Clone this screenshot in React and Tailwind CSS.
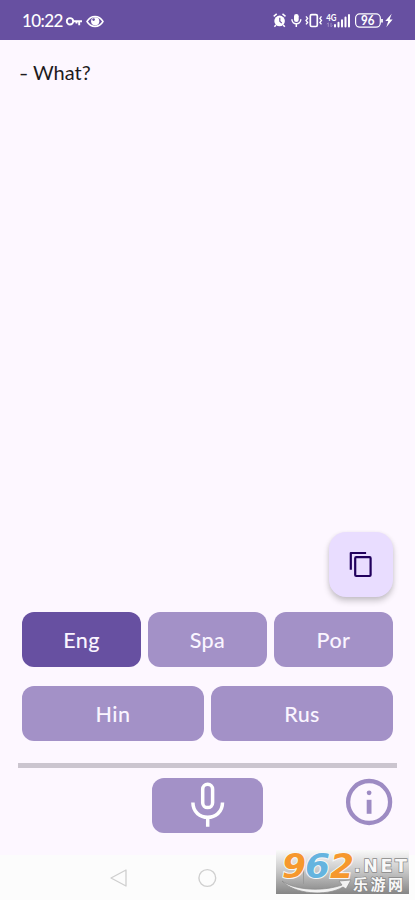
import React from 'react';

const LANGUAGE_ROWS = [
  ['Eng', 'Spa', 'Por'],
  ['Hin', 'Rus'],
];

/**
 * Android status bar
 */
const StatusBar = () => (
  <header className="flex h-10 shrink-0 items-center justify-between bg-[#6750a1] pl-[22px] pr-[21px] text-white">
    <div className="flex items-center pt-0.5">
      <span className="w-[43px] text-[17px] font-medium leading-5 tracking-[-0.6px]">10:22</span>
      <svg width="17" height="11" viewBox="0 0 17 11" fill="none" stroke="currentColor" strokeWidth="1.9">
        <circle cx="5" cy="5.3" r="3.2" />
        <path d="M8.2 5.2H17M14.2 5.2v4M11.5 5.2v2.3" />
      </svg>
      <svg className="ml-1" width="18" height="13" viewBox="0 0 18 13">
        <path d="M1 6.5C5-.3 13-.3 17 6.5 13 13.2 5 13.2 1 6.5Z" fill="none" stroke="currentColor" strokeWidth="1.5" />
        <circle cx="9.2" cy="6.3" r="4.1" fill="currentColor" />
        <circle cx="7.6" cy="4.6" r="1.3" fill="#6750a1" />
      </svg>
    </div>
    <StatusIcons />
  </header>
);

/**
 * Alarm, microphone, vibration, signal, battery
 */
const StatusIcons = () => (
  <svg width="121" height="16" viewBox="273 12 121 16" fill="none" stroke="currentColor">
    <circle cx="279.6" cy="20.9" r="5.3" fill="currentColor" stroke="none" />
    <path d="m273.7 16.4 3-2.5M285.5 16.4l-3-2.5M276 25l-1.6 1.8M283.2 25l1.6 1.8" strokeWidth="1.5" />
    <path d="M279.8 17.8v3.5l2 1.8" stroke="#6750a1" strokeWidth="1.2" />
    <rect x="294" y="13.9" width="4.7" height="8.2" rx="2.35" fill="currentColor" stroke="none" />
    <path d="M291.9 19.2c0 6 8.9 6 8.9 0M296.3 23.6v3.4" strokeWidth="1.5" />
    <rect x="310.3" y="14.7" width="7" height="11.8" rx="1.4" strokeWidth="1.7" />
    <path d="m306 16.4 1.6 2-1.6 2 1.6 2-1.6 2M321.5 16.4l-1.6 2 1.6 2-1.6 2 1.6 2" strokeWidth="1.4" />
    <text x="326.3" y="20.8" fontSize="9.3" fontWeight="700" textLength="10.2" lengthAdjust="spacingAndGlyphs" fill="currentColor" stroke="none">4G</text>
    <path d="M328.3 22.9v4M327 24.2l1.3-1.5M331 22.9v4M332.4 25.4l-1.4 1.5" stroke="#9d8bc3" strokeWidth="1" />
    <path d="M335 25v1.4M338.5 22.8v3.6M342 20.2v6.2M345.5 17.6v8.8M349 15v11.4" strokeWidth="2" strokeLinecap="round" />
    <rect x="355.6" y="13.9" width="24.7" height="13.3" rx="4.2" strokeWidth="1.2" />
    <path d="M382 18.9v3.5" strokeWidth="1.7" />
    <text x="360.9" y="24.8" fontSize="12.3" fontWeight="700" textLength="13.5" lengthAdjust="spacingAndGlyphs" fill="currentColor" stroke="none">96</text>
    <path d="m391.7 13.7-6.4 7.2h3l-2 6.4 6.3-7.7h-3z" fill="currentColor" stroke="none" />
  </svg>
);

/**
 * Floating copy button
 */
const CopyButton = () => (
  <button
    aria-label="Copy"
    className="mr-[22px] flex h-[65px] w-16 items-center justify-center self-end rounded-[17px] bg-[#e9ddff] text-[#21005d] shadow-[0_4px_6px_rgba(0,0,0,0.2),0_1px_4px_rgba(0,0,0,0.06)]"
  >
    <svg width="24" height="28" viewBox="0 0 24 28" fill="none" stroke="currentColor" strokeWidth="2.2" strokeLinejoin="round">
      <path d="M1.8 18.8V2h15.3" />
      <rect x="6.2" y="6.2" width="15.4" height="18.8" rx="1" />
    </svg>
  </button>
);

/**
 * Language selection button
 */
const LanguageButton = ({ label, active }) => (
  <button
    className={`h-[55px] flex-1 rounded-xl pt-0.5 text-[21.5px] font-medium leading-none tracking-[0.4px] text-[#faf5ff] ${
      active ? 'bg-[#6750a1]' : 'bg-[#a391c7]'
    }`}
  >
    {label}
  </button>
);

/**
 * Microphone and info controls
 */
const BottomControls = () => (
  <div className="mx-[22px] mt-2.5 grid h-[55px] grid-cols-[1fr_111px_1fr]">
    <button aria-label="Record" className="col-start-2 flex items-center justify-center rounded-xl bg-[#a391c7] text-white">
      <svg width="34" height="48" viewBox="0 0 34 48" fill="none" stroke="currentColor" strokeWidth="3.5">
        <rect x="11.7" y="2.3" width="9.9" height="23.3" rx="4.95" />
        <path d="M1.9 20.5C1.9 40.2 31.5 40.2 31.5 20.5M16.7 35.2v9.6" />
      </svg>
    </button>
    <button aria-label="Info" className="-mr-px -mt-2 self-center justify-self-end text-[#9d8bc3]">
      <svg width="50" height="50" viewBox="0 0 50 50" fill="none" stroke="currentColor">
        <circle cx="25.1" cy="25" r="21" strokeWidth="4.3" />
        <circle cx="25.1" cy="15.8" r="2.4" fill="currentColor" stroke="none" />
        <path d="M25.1 22.8v14" strokeWidth="4.8" />
      </svg>
    </button>
  </div>
);

/**
 * System navigation with the site badge over its right side
 */
const NavigationBar = () => (
  <nav className="relative h-[45px] shrink-0 bg-[#fcfcfc] text-[#cfcfcf]">
    <div className="flex h-full items-center pl-[109px]">
      <svg width="20" height="20" viewBox="0 0 20 20" fill="none" stroke="currentColor" strokeWidth="1.3" strokeLinejoin="round">
        <path d="M2 10 17 2v16z" />
      </svg>
      <svg className="ml-[68px]" width="20" height="20" viewBox="0 0 20 20" fill="none" stroke="currentColor" strokeWidth="1.4">
        <circle cx="10.3" cy="10" r="8.4" />
      </svg>
    </div>
    <SiteBadge />
  </nav>
);

const SiteBadge = () => (
  <svg className="absolute bottom-1.5 right-1.5 overflow-visible" width="133" height="44" viewBox="0 0 133 44">
    <defs>
      <linearGradient id="badge" x2="0" y2="1">
        <stop stopColor="#fafafa" />
        <stop offset="0.5" stopColor="#c5c5c5" />
        <stop offset="1" stopColor="#858585" />
      </linearGradient>
    </defs>
    <path fill="url(#badge)" d="M0 0h133v44H0z" />
    <path d="M27.5 20v14" stroke="#999" strokeWidth="1" />
    <g fontFamily="DejaVu Sans, sans-serif" fontWeight="700" fontStyle="italic" fontSize="33" stroke="#f7f7f7" strokeWidth="2" paintOrder="stroke">
      <text x="6" y="28" textLength="24" lengthAdjust="spacingAndGlyphs" fill="#f6982d">9</text>
      <text x="29" y="28" textLength="25" lengthAdjust="spacingAndGlyphs" fill="#65b4df">6</text>
      <text x="54" y="28" textLength="24" lengthAdjust="spacingAndGlyphs" fill="#f6982d">2</text>
    </g>
    <g fill="#f8f8f8" stroke="#888" strokeWidth="1.4" paintOrder="stroke" fontWeight="700">
      <text x="78" y="21.5" fontFamily="DejaVu Sans, sans-serif" fontSize="17.5" textLength="53" lengthAdjust="spacing">.NET</text>
      <text x="77" y="39.5" fontFamily="Noto Sans CJK SC, sans-serif" fontSize="15" textLength="50">乐游网</text>
    </g>
    <path d="M6 31c12 9 40 11 60 4l-3-4 12-1-5 9-3-2C50 47 18 44 6 31Z" fill="#f2f2f2" stroke="#888" strokeWidth="0.7" />
  </svg>
);

const App = () => (
  <div className="flex h-screen w-full flex-col overflow-hidden bg-[#fdf7ff] font-['Lato','Liberation_Sans',sans-serif]">
    <StatusBar />
    <main className="flex min-h-0 flex-1 flex-col">
      <p className="flex-1 px-[19px] pt-[18px] text-[20px] leading-7 tracking-[0.05px] text-[#1d1b20]">
        <span className="mr-[1.5px] inline-block origin-left scale-x-125">-</span> What?
      </p>
      <CopyButton />
      <div className="mx-[22px] mt-[15px] flex flex-col gap-[19px]">
        {LANGUAGE_ROWS.map((row, index) => (
          <div key={index} className="flex gap-[7px]">
            {row.map((label) => (
              <LanguageButton key={label} label={label} active={label === 'Eng'} />
            ))}
          </div>
        ))}
      </div>
      <div className="mx-[18px] mt-[22px] h-[5px] bg-[#cbc5cf]" />
      <BottomControls />
      <div className="h-[22px] shrink-0" />
    </main>
    <NavigationBar />
  </div>
);

export default App;
